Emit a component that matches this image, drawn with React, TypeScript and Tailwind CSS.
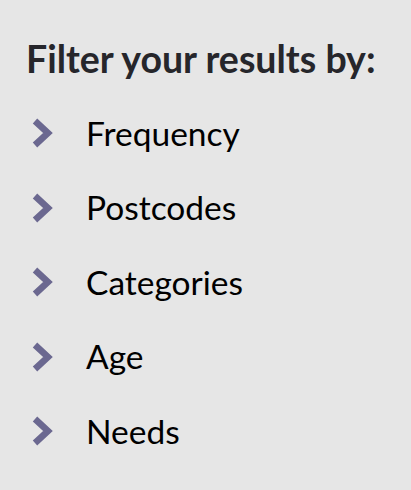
const filters = ["Frequency", "Postcodes", "Categories", "Age", "Needs"];

function Chevron() {
  return (
    <svg width="24" height="30" viewBox="0 0 24 30" className="shrink-0">
      <path d="M5 3 L18 15 L5 27" fill="none" stroke="#6b6890" strokeWidth="6.5" strokeLinejoin="miter" />
    </svg>
  );
}

export default function App() {
  return (
    <div
      className="w-[411px] h-[490px] bg-[#e6e6e6] px-[26px] pt-[36px]"
      style={{ fontFamily: "Lato, sans-serif" }}
    >
      <h2 className="text-[37.5px] font-bold text-[#26262b] leading-[46px] mb-[14px]">
        Filter your results by:
      </h2>
      <ul className="flex flex-col">
        {filters.map((f) => (
          <li key={f} className="flex items-center h-[74.5px] pl-[4px]">
            <Chevron />
            <span className="ml-[32px] text-[33.5px] text-black leading-none">{f}</span>
          </li>
        ))}
      </ul>
    </div>
  );
}
